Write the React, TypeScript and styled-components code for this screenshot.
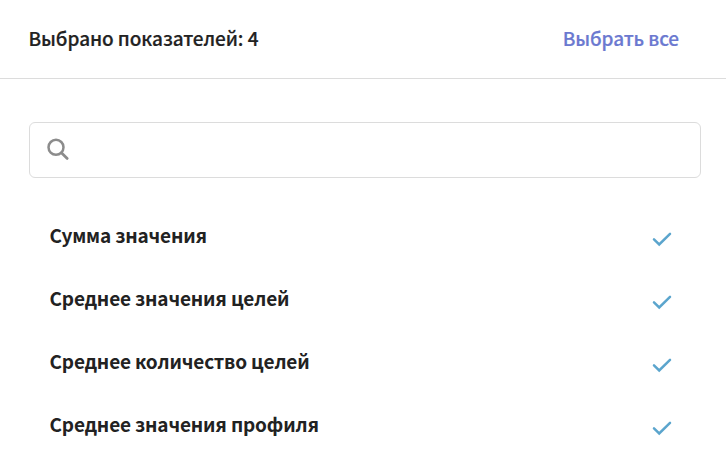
import React from "react";
import styled, { createGlobalStyle } from "styled-components";

const GlobalStyle = createGlobalStyle`
  * { box-sizing: border-box; }
  body {
    margin: 0;
    background: #fff;
    color: #222;
    font-family: "Noto Sans CJK SC", "Noto Sans", sans-serif;
    font-size: 19px;
    line-height: 28px;
  }
`;

const Panel = styled.section`
  height: 452px;
  overflow: hidden;
`;

const Header = styled.header`
  display: flex;
  justify-content: space-between;
  height: 79px;
  padding: 24px 47px 0 28.5px;
  border-bottom: 1px solid #dcdcdc;
`;

const Title = styled.span`
  font-weight: 500;
  letter-spacing: -0.08px;
  -webkit-text-stroke: 0.2px currentColor;
`;

const SelectAll = styled.button`
  align-self: flex-start;
  padding: 0;
  border: 0;
  background: none;
  color: #6b79d0;
  font: inherit;
  font-weight: 500;
  letter-spacing: -0.12px;
  cursor: pointer;
  -webkit-text-stroke: 0.2px currentColor;
`;

const SearchBox = styled.label`
  display: flex;
  align-items: center;
  height: 56px;
  margin: 43px 25px 0 29px;
  padding: 0 17px;
  border: 1px solid #dcdcdc;
  border-radius: 6px;
`;

const SearchIcon = styled.svg`
  flex: none;
  overflow: visible;
`;

const SearchInput = styled.input`
  flex: 1;
  margin-left: 12px;
  border: 0;
  outline: 0;
  background: none;
  font: inherit;
`;

const List = styled.ul`
  margin: 25px 0 0;
  padding: 0;
  list-style: none;
`;

const Item = styled.li`
  display: flex;
  align-items: center;
  justify-content: space-between;
  height: 63px;
  padding: 0 54px 0 49.5px;
  font-weight: 700;
  letter-spacing: -0.16px;
`;

const CheckIcon = styled.svg`
  margin-top: 9px;
`;

const metrics = [
  "Сумма значения",
  "Среднее значения целей",
  "Среднее количество целей",
  "Среднее значения профиля",
];

export default function App() {
  return (
    <Panel>
      <GlobalStyle />
      <Header>
        <Title>Выбрано показателей: 4</Title>
        <SelectAll type="button">Выбрать все</SelectAll>
      </Header>
      <SearchBox>
        <SearchIcon width="22" height="22" viewBox="0 0 22 22" fill="none" stroke="#8c8c8c">
          <circle cx="9" cy="8.3" r="7.5" strokeWidth="2.5" />
          <path d="M14.4 13.8L20.2 19.4" strokeWidth="2.8" strokeLinecap="round" />
        </SearchIcon>
        <SearchInput aria-label="Поиск" />
      </SearchBox>
      <List>
        {metrics.map((name) => (
          <Item key={name}>
            {name}
            <CheckIcon width="20" height="16" viewBox="0 0 20 16" fill="none" stroke="#5ba5cd">
              <path d="M2 8.4L7.2 13.4L18 2.8" strokeWidth="2.5" strokeLinecap="round" />
            </CheckIcon>
          </Item>
        ))}
      </List>
    </Panel>
  );
}
